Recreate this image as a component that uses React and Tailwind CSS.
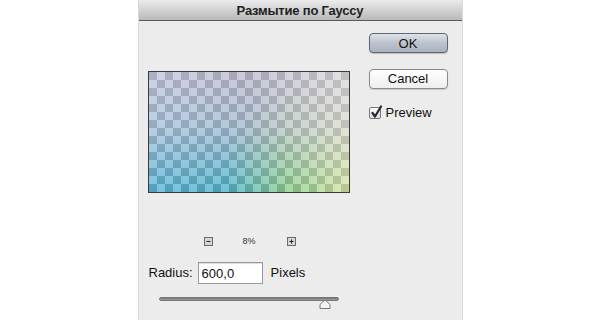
import React from "react";

const FONT = { fontFamily: "'Liberation Sans', Arial, sans-serif" };

function PreviewImage() {
  return (
    <svg width="200" height="120" viewBox="0 0 200 120" className="block">
      <defs>
        <linearGradient id="bottomRow" x1="0" y1="0" x2="1" y2="0">
          <stop offset="0" stopColor="#5cb6d8" />
          <stop offset="0.4" stopColor="#52b6cc" />
          <stop offset="0.68" stopColor="#8ccf92" />
          <stop offset="1" stopColor="#d6e6a4" />
        </linearGradient>
        <linearGradient id="topRow" x1="0" y1="0" x2="1" y2="0">
          <stop offset="0" stopColor="#c6c8de" />
          <stop offset="0.5" stopColor="#c0bcd2" />
          <stop offset="1" stopColor="#dedadf" />
        </linearGradient>
        <linearGradient id="fade" x1="0" y1="0" x2="0" y2="1">
          <stop offset="0" stopColor="#fff" stopOpacity="1" />
          <stop offset="0.45" stopColor="#fff" stopOpacity="0.75" />
          <stop offset="1" stopColor="#fff" stopOpacity="0" />
        </linearGradient>
        <mask id="fadeMask">
          <rect width="200" height="120" fill="url(#fade)" />
        </mask>
        <pattern id="checker" width="16" height="16" patternUnits="userSpaceOnUse">
          <rect width="8" height="8" fill="#000" fillOpacity="0.12" />
          <rect x="8" y="8" width="8" height="8" fill="#000" fillOpacity="0.12" />
          <rect x="8" width="8" height="8" fill="#fff" fillOpacity="0.18" />
          <rect y="8" width="8" height="8" fill="#fff" fillOpacity="0.18" />
        </pattern>
      </defs>
      <rect width="200" height="120" fill="url(#bottomRow)" />
      <rect width="200" height="120" fill="url(#topRow)" mask="url(#fadeMask)" />
      <rect width="200" height="120" fill="url(#checker)" />
    </svg>
  );
}

function MacButton({ children, primary }) {
  return (
    <button
      className={
        primary
          ? "w-[79px] h-[20px] rounded-[4px] border border-[#5e6670] bg-gradient-to-b from-[#dfe3e9] via-[#bcc3cd] to-[#aab2be] text-[13px] text-[#111] leading-none shadow-[0_1px_1px_rgba(0,0,0,0.2)]"
          : "w-[79px] h-[20px] rounded-[4px] border border-[#8a8a8a] bg-gradient-to-b from-[#ffffff] to-[#eeeeee] text-[13px] text-[#111] leading-none shadow-[0_1px_1px_rgba(0,0,0,0.15)]"
      }
      style={FONT}
    >
      {children}
    </button>
  );
}

function SmallBox({ sign }) {
  return (
    <div className="w-[9px] h-[9px] border border-[#6a6a6a] bg-[#d6d6d6] flex items-center justify-center">
      <svg width="7" height="7" viewBox="0 0 7 7" className="block">
        <path d="M1.5 3.5H5.5" stroke="#222" strokeWidth="1" />
        {sign === "+" && <path d="M3.5 1.5V5.5" stroke="#222" strokeWidth="1" />}
      </svg>
    </div>
  );
}

export default function App() {
  return (
    <div className="w-[600px] h-[320px] bg-white overflow-hidden" style={FONT}>
      <div className="mx-auto w-[325px] h-[320px] bg-[#ececec] border-x border-[#dadada] flex flex-col">
        <div className="h-[21px] shrink-0 bg-gradient-to-b from-[#ececec] to-[#b9b9b9] border-b border-[#5a5a5a] flex items-center justify-center">
          <span className="text-[13px] font-bold text-[#222] leading-none tracking-[-0.2px]">Размытие по Гауссу</span>
        </div>

        <div className="flex pl-[9px]">
          <div className="w-[202px] flex flex-col">
            <div className="mt-[50px] border border-[#3a3a3a]">
              <PreviewImage />
            </div>

            <div className="mt-[44px] flex items-center pl-[56px] h-[9px]">
              <SmallBox sign="-" />
              <span className="ml-[30px] text-[9px] leading-none text-[#333]">8%</span>
              <span className="ml-[31px]"><SmallBox sign="+" /></span>
            </div>

            <div className="mt-[16px] flex items-center">
              <span className="ml-[1px] text-[13px] text-[#111]">Radius:</span>
              <div className="ml-[5px] w-[65px] h-[22px] bg-white border border-[#9a9a9a] shadow-[inset_0_1px_1px_rgba(0,0,0,0.15)] flex items-center pl-[3px]">
                <span className="text-[13px] text-[#111] leading-none">600,0</span>
              </div>
              <span className="ml-[8px] text-[13px] text-[#111]">Pixels</span>
            </div>

            <div className="mt-[13px] relative ml-[11px] w-[180px] h-[14px]">
              <div className="h-[4px] rounded-full bg-gradient-to-b from-[#6e6e6e] to-[#a8a8a8] border border-[#777]"></div>
              <svg className="absolute left-[160px] top-[2px]" width="12" height="10" viewBox="0 0 12 10">
                <path d="M1 9.5V5.5L6 0.8L11 5.5V9.5Z" fill="#f4f4f4" stroke="#7a7a7a" strokeWidth="1" />
              </svg>
            </div>
          </div>

          <div className="ml-[19px] mt-[12px] flex flex-col">
            <MacButton primary>OK</MacButton>
            <div className="mt-[13px]">
              <MacButton>Cancel</MacButton>
            </div>
            <div className="mt-[16px] flex items-center">
              <div className="relative w-[12px] h-[12px] rounded-[2px] border border-[#777] bg-gradient-to-b from-[#ffffff] to-[#dcdcdc]">
                <svg className="absolute -top-[3px] left-[0px]" width="13" height="14" viewBox="0 0 13 14">
                  <path d="M2.5 8L5 11.5L11 1.5" fill="none" stroke="#222a36" strokeWidth="2.2" strokeLinecap="round" strokeLinejoin="round" />
                </svg>
              </div>
              <span className="ml-[5px] text-[13px] text-[#111] leading-none">Preview</span>
            </div>
          </div>
        </div>
      </div>
    </div>
  );
}
